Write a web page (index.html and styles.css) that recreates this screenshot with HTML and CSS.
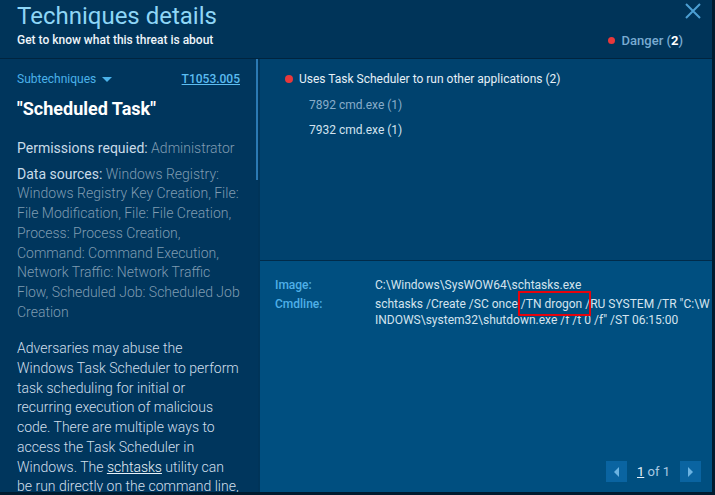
FILE: index.html
```html
<!DOCTYPE html>
<html lang="en">
<head>
    <meta charset="UTF-8">
    <meta name="viewport" content="width=device-width, initial-scale=1.0">
    <title>Techniques details</title>
    <link rel="stylesheet" href="styles.css">
</head>
<body>
    <div class="modal">
        <header class="modal-header">
            <div class="titles">
                <h1>Techniques details</h1>
                <p>Get to know what this threat is about</p>
            </div>
            <div class="header-side">
                <button class="close-btn" aria-label="Close">
                    <svg width="18" height="18" viewBox="0 0 18 18">
                        <path d="M2 2 L16 16 M16 2 L2 16" stroke="currentColor" stroke-width="2" fill="none"/>
                    </svg>
                </button>
                <div class="severity"><span class="dot"></span>Danger (<b>2</b>)</div>
            </div>
        </header>

        <div class="modal-body">
            <aside class="technique">
                <div class="technique-top">
                    <span class="subtech">Subtechniques <span class="caret"></span></span>
                    <a href="#" class="tech-id">T1053.005</a>
                </div>
                <h2>"Scheduled Task"</h2>
                <p class="field"><span class="label">Permissions requied:</span> Administrator</p>
                <p class="field"><span class="label">Data sources:</span> Windows Registry: Windows Registry Key Creation, File: File Modification, File: File Creation, Process: Process Creation, Command: Command Execution, Network Traffic: Network Traffic Flow, Scheduled Job: Scheduled Job Creation</p>
                <p class="description">Adversaries may abuse the Windows Task Scheduler to perform task scheduling for initial or recurring execution of malicious code. There are multiple ways to access the Task Scheduler in Windows. The <a href="#">schtasks</a> utility can be run directly on the command line, or the Task Scheduler can be opened through the GUI within the Administrator Tools section of the Control Panel.</p>
                <div class="scroll-thumb"></div>
            </aside>

            <section class="events">
                <div class="event-list">
                    <div class="event-group"><span class="dot"></span>Uses Task Scheduler to run other applications (2)</div>
                    <div class="event-item">7892 cmd.exe (1)</div>
                    <div class="event-item active">7932 cmd.exe (1)</div>
                </div>

                <div class="event-detail">
                    <dl class="props">
                        <dt>Image:</dt>
                        <dd>C:\Windows\SysWOW64\schtasks.exe</dd>
                        <dt>Cmdline:</dt>
                        <dd>schtasks /Create /SC once <span class="mark">/TN drogon</span> /RU SYSTEM /TR "C:\WINDOWS\system32\shutdown.exe /f /t 0 /f" /ST 06:15:00</dd>
                    </dl>
                    <div class="pager">
                        <button class="page-btn"><span class="arrow left"></span></button>
                        <span class="page-info"><u>1</u> of 1</span>
                        <button class="page-btn"><span class="arrow right"></span></button>
                    </div>
                </div>
            </section>
        </div>
    </div>
</body>
</html>
```

FILE: styles.css
```css
body {
    margin: 0;
    background-color: #001b2f;
    font-family: Roboto, "Liberation Sans", sans-serif;
}

.modal {
    width: 712px;
    height: 492px;
    display: flex;
    flex-direction: column;
    background-color: #003459;
    overflow: hidden;
}

/* header */

.modal-header {
    height: 58px;
    flex: none;
    display: flex;
    justify-content: space-between;
    border-bottom: 1px solid #00243f;
}

.titles {
    padding-left: 17px;
}

.titles h1 {
    margin: 0;
    padding-top: 2px;
    font-size: 24px;
    line-height: 28px;
    font-weight: 400;
    color: #8ed6f6;
}

.titles p {
    margin: 3px 0 0;
    font-size: 12px;
    font-weight: 500;
    color: #eef5fa;
}

.header-side {
    display: flex;
    flex-direction: column;
    align-items: flex-end;
    padding-right: 10px;
}

.close-btn {
    background: none;
    border: none;
    padding: 0;
    margin-top: 2px;
    color: #4c9fd3;
    cursor: pointer;
    line-height: 0;
}

.severity {
    margin-top: 13px;
    margin-right: 19px;
    font-size: 13px;
    font-weight: 500;
    color: #79abd1;
    display: flex;
    align-items: center;
}

.severity b {
    color: #ffffff;
}

.dot {
    width: 7px;
    height: 7px;
    border-radius: 50%;
    background-color: #e8383b;
    margin-right: 7px;
    flex: none;
}

/* body */

.modal-body {
    flex: 1;
    display: flex;
    min-height: 0;
}

.technique {
    position: relative;
    width: 258px;
    flex: none;
    box-sizing: border-box;
    padding: 12px 18px 0 17px;
    background-color: #00365d;
    overflow: hidden;
    font-size: 14px;
    line-height: 19.7px;
    font-weight: 300;
    color: #7f9bb1;
}

.scroll-thumb {
    position: absolute;
    top: 0;
    right: 0;
    width: 2px;
    height: 121px;
    background-color: #2b79b3;
}

.technique-top {
    display: flex;
    justify-content: space-between;
    align-items: center;
    font-size: 12px;
    line-height: 16px;
    font-weight: 400;
}

.subtech {
    color: #4bb2ea;
    display: flex;
    align-items: center;
}

.caret {
    margin-left: 6px;
    border-left: 5px solid transparent;
    border-right: 5px solid transparent;
    border-top: 5px solid #4bb2ea;
}

.tech-id {
    color: #5cbdf2;
    font-weight: 500;
}

.technique h2 {
    margin: 11px 0 0;
    font-size: 18px;
    line-height: 22px;
    font-weight: 700;
    color: #ffffff;
}

.field {
    margin: 19px 0 0;
}

.field + .field {
    margin-top: 6px;
}

.field .label {
    font-weight: 400;
    color: #c9dbe8;
}

.description {
    margin: 17px 0 0;
    color: #d0dfeb;
}

.description a {
    color: #e8f1f8;
}

/* events */

.events {
    flex: 1;
    display: flex;
    flex-direction: column;
    margin-left: 2px;
}

.event-list {
    height: 202px;
    flex: none;
    box-sizing: border-box;
    padding: 12px 0 0 25px;
    background-color: #00426e;
    border-bottom: 1px solid #002b4a;
    font-size: 12px;
}

.event-group {
    display: flex;
    align-items: center;
    height: 16px;
    color: #e6f0f7;
}

.event-group .dot {
    width: 8px;
    height: 8px;
    margin-right: 6px;
}

.event-item {
    margin: 10px 0 0 24px;
    line-height: 16px;
    color: #88adca;
}

.event-item + .event-item {
    margin-top: 9px;
}

.event-item.active {
    color: #d3e2ee;
}

.event-detail {
    flex: 1;
    display: flex;
    flex-direction: column;
    justify-content: space-between;
    background-color: #004f80;
    padding: 16px 2px 10px 15px;
    font-size: 12px;
    line-height: 16px;
}

.props {
    margin: 0;
    display: grid;
    grid-template-columns: 100px 1fr;
    row-gap: 3px;
}

.props dt {
    color: #4fb0e8;
    font-weight: 500;
}

.props dd {
    margin: 0;
    color: #d4e3ee;
    word-break: break-all;
}

.mark {
    position: relative;
}

.mark::after {
    content: "";
    position: absolute;
    left: -3px;
    right: -9px;
    top: -6px;
    bottom: -5px;
    border: 2px solid #e5040d;
}

.pager {
    align-self: flex-end;
    display: flex;
    align-items: center;
    margin-right: 9px;
}

.page-btn {
    width: 21px;
    height: 21px;
    border: none;
    padding: 0;
    background-color: #0a64a1;
    display: flex;
    align-items: center;
    justify-content: center;
    cursor: pointer;
}

.page-info {
    margin: 0 10px;
    font-size: 13px;
    color: #a9c9e2;
}

.page-info u {
    color: #e8f1f8;
}

.arrow {
    border-top: 5px solid transparent;
    border-bottom: 5px solid transparent;
}

.arrow.left {
    border-right: 5px solid #6cb3e2;
}

.arrow.right {
    border-left: 5px solid #6cb3e2;
}
```
